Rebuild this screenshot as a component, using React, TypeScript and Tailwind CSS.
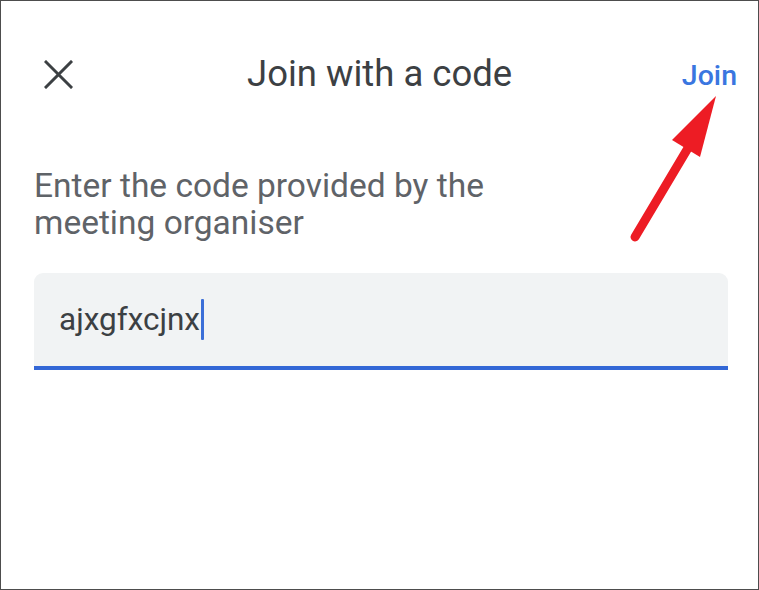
import React from 'react';

const Arrow: React.FC = () => (
  <svg className="pointer-events-none absolute left-0 top-0" width="759" height="590" viewBox="0 0 759 590">
    <line x1="634" y1="236" x2="690" y2="142" stroke="#ed1c24" strokeWidth="9" strokeLinecap="round" />
    <polygon points="715,95 671,139 699,156" fill="#ed1c24" />
  </svg>
);

export default function App() {
  return (
    <div
      className="relative h-[590px] w-[759px] overflow-hidden border border-[#4d4d4d] bg-white"
      style={{ fontFamily: 'Roboto, "Noto Sans", sans-serif' }}
    >
      <div className="flex h-[166px] items-start pl-[32px] pr-[21px] pt-[51px]">
        <button className="flex h-[44px] w-[50px] items-center justify-center" aria-label="Close">
          <svg width="29" height="29" viewBox="0 0 29 29">
            <path d="M2 2 L27 27 M27 2 L2 27" stroke="#3c4043" strokeWidth="3" strokeLinecap="square" />
          </svg>
        </button>
        <h1 className="ml-[164px] text-[36.5px] leading-[44px] text-[#3c4043]">Join with a code</h1>
        <span className="ml-auto pt-[2px] text-[28.5px] font-medium leading-[44px] text-[#3a76e0]">Join</span>
      </div>

      <div className="px-[33px]">
        <p className="w-[475px] text-[33.5px] leading-[37px] text-[#5f6368]">
          Enter the code provided by the meeting organiser
        </p>

        <div className="mt-[32px] flex h-[97px] w-[694px] items-center rounded-t-[9px] border-b-4 border-[#3367d6] bg-[#f1f3f4] px-[25px]">
          <span className="text-[31.5px] leading-[40px] text-[#3c4043]">ajxgfxcjnx</span>
          <span className="ml-[1px] h-[41px] w-[3px] rounded-[1px] bg-[#3b6fd8]" />
        </div>
      </div>

      <Arrow />
    </div>
  );
}
